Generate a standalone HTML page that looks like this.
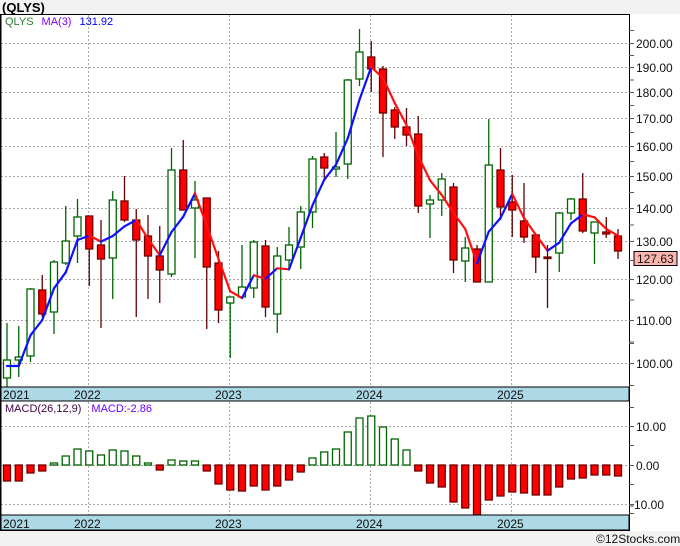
<!DOCTYPE html>
<html><head><meta charset="utf-8">
<style>
html,body{margin:0;padding:0;background:#f2f2f2;}
body{width:680px;height:546px;overflow:hidden;position:relative;font-family:"Liberation Sans",sans-serif;}
svg{position:absolute;left:0;top:0;}
</style></head><body>
<svg id="c" width="680" height="546" xmlns="http://www.w3.org/2000/svg" font-family="Liberation Sans, sans-serif">
<rect x="0" y="0" width="680" height="546" fill="#f2f2f2"/>
<rect x="0" y="14" width="680" height="517" fill="#ffffff"/>
<text x="2" y="12" font-size="13" font-weight="bold" fill="#000">(QLYS)</text>
<g id="grid"></g>
<g id="chart"></g>
<rect x="0" y="387" width="629" height="14" fill="#add8e6" stroke="#000" stroke-width="1"/>
<rect x="0" y="515" width="629" height="15" fill="#add8e6" stroke="#000" stroke-width="1"/>
<g font-size="12" fill="#111">
<text x="3" y="399">2021</text><text x="74" y="399">2022</text><text x="215" y="399">2023</text><text x="356" y="399">2024</text><text x="497" y="399">2025</text>
<text x="3" y="528">2021</text><text x="74" y="528">2022</text><text x="215" y="528">2023</text><text x="356" y="528">2024</text><text x="497" y="528">2025</text>
</g>
<line x1="0.5" y1="14" x2="0.5" y2="531" stroke="#000" stroke-width="2"/>
<line x1="0" y1="14.5" x2="629" y2="14.5" stroke="#000" stroke-width="1"/>
<line x1="629.5" y1="14" x2="629.5" y2="531" stroke="#000" stroke-width="1"/>
<line x1="0" y1="530.5" x2="629" y2="530.5" stroke="#000" stroke-width="1"/>
<g font-size="12" fill="#111" id="axis">
<text x="636" y="48">200.00</text><text x="636" y="72">190.00</text><text x="636" y="97">180.00</text>
<text x="636" y="123">170.00</text><text x="636" y="151">160.00</text><text x="636" y="181">150.00</text>
<text x="636" y="213">140.00</text><text x="636" y="246">130.00</text><text x="636" y="284">120.00</text>
<text x="636" y="325">110.00</text><text x="636" y="368">100.00</text>
<text x="636" y="431">10.00</text><text x="636" y="470">0.00</text><text x="630" y="509">-10.00</text>
</g>
<rect x="634" y="251.5" width="43" height="14" fill="#ffb6b0" stroke="#000" stroke-width="1"/>
<text x="637" y="263" font-size="12" fill="#111">127.63</text>
<text x="5" y="25" font-size="11"><tspan fill="#2e7d32">QLYS</tspan><tspan fill="#8000ff" dx="8">MA(3)</tspan><tspan fill="#0000ff" dx="8">131.92</tspan></text>
<text x="5" y="412" font-size="11"><tspan fill="#400040">MACD(26,12,9)</tspan><tspan fill="#6a00ff" dx="10">MACD:-2.86</tspan></text>
<text x="596" y="543" font-size="12" fill="#111">©12Stocks.com</text>
</svg>
<script>
var NS="http://www.w3.org/2000/svg";
function el(p,t,a){var e=document.createElementNS(NS,t);for(var k in a)e.setAttribute(k,a[k]);p.appendChild(e);return e;}
var grid=document.getElementById('grid'),ch=document.getElementById('chart'),svg=document.getElementById('c');
var ys=[43,67,92,118,146,176,208,241,279,320,363];
ys.forEach(function(y){el(grid,'line',{x1:1,y1:y+.5,x2:629,y2:y+.5,stroke:'#aaa','stroke-width':1,'stroke-dasharray':'2,2'});});
[426,465,504].forEach(function(y){el(grid,'line',{x1:1,y1:y+.5,x2:629,y2:y+.5,stroke:'#aaa','stroke-width':1,'stroke-dasharray':'2,2'});});
[88,229,370,511].forEach(function(x){el(grid,'line',{x1:x+.5,y1:15,x2:x+.5,y2:387,stroke:'#aaa','stroke-width':1,'stroke-dasharray':'2,2'});el(grid,'line',{x1:x+.5,y1:402,x2:x+.5,y2:515,stroke:'#aaa','stroke-width':1,'stroke-dasharray':'2,2'});});
var tk=[];for(var i=0;i<ys.length;i++){tk.push(ys[i]);if(i<ys.length-1)tk.push((ys[i]+ys[i+1])/2);}
tk.push(30,385,343);
tk.forEach(function(y){el(svg,'line',{x1:629,y1:y+.5,x2:634,y2:y+.5,stroke:'#555','stroke-width':1});});
[407,426,445,465,484,504,513].forEach(function(y){el(svg,'line',{x1:629,y1:y+.5,x2:634,y2:y+.5,stroke:'#555','stroke-width':1});});
var C=[[360,378,323,387,1],[357,360,326,377,1],[289,356,288,362,1],[290,314,275,317,0],[262,312,260,334,1],[241,263,206,265,1],[217,236,199,263,1],[216,249,216,286,0],[245,259,220,328,0],[200,258,191,299,1],[201,220,176,222,0],[220,240,209,317,0],[236,256,215,299,0],[256,270,226,303,0],[170,274,148,277,1],[170,210,140,210,0],[200,208,181,258,1],[198,267,198,329,0],[263,310,251,323,0],[297,303,297,358,1],[287,297,245,298,1],[242,288,240,298,1],[246,307,240,317,0],[256,314,247,333,1],[245,260,227,268,1],[212,247,206,269,1],[159,212,156,228,1],[157,168,153,178,0],[167,169,132,177,1],[80,164,79,179,1],[52,79,29,86,1],[57,69,41,92,0],[69,113,66,157,0],[110,127,107,139,0],[127,135,108,146,0],[134,206,116,213,0],[200,204,195,238,1],[179,200,173,216,1],[187,260,183,273,0],[248,261,237,282,1],[249,282,245,282,0],[165,282,119,282,1],[170,207,148,220,0],[202,210,175,237,0],[221,237,183,243,0],[235,257,235,273,0],[257,258,245,308,0],[213,253,212,272,1],[199,213,198,220,1],[199,231,173,233,0],[222,233,222,264,1],[232,234,217,238,0],[236,251,229,259,0]];
function X(i){return 7+i*11.75;}
C.forEach(function(c,i){var x=X(i);var g=c[4];
el(ch,'line',{x1:x,y1:c[2],x2:x,y2:c[3],stroke:g?'#006400':'#600000','stroke-width':1.3});
el(ch,'rect',{x:x-3.5,y:c[0],width:7,height:Math.max(1.5,c[1]-c[0]),fill:g?'#fff':'#ff0000',stroke:g?'#006400':'#700000','stroke-width':1.3});});
var cl=C.map(function(c){return c[4]?c[0]:c[1];});var ma=[];
for(var i=0;i<C.length;i++){var s=0,n=0;for(var j=Math.max(0,i-2);j<=i;j++){s+=cl[j];n++;}ma.push(s/n);}
ma[0]=366;ma[1]=366;
for(var i=1;i<ma.length;i++){el(ch,'line',{x1:X(i-1),y1:ma[i-1],x2:X(i),y2:ma[i],stroke:ma[i]<=ma[i-1]?'#1010ff':'#ff1010','stroke-width':2.2,'stroke-linecap':'round'});}
var M=[481,481,473,471,463,456,449,451,455,450,451,456,463,470,460,461,461,471,484,490,491,486,490,486,480,472,458,452,449,432,418,416,427,439,450,471,483,487,502,508,515,500,496,492,493,495,495,487,479,478,475,475,476];
M.forEach(function(v,i){var x=X(i);var z=465;if(v<z){el(ch,'rect',{x:x-3.5,y:v,width:7,height:z-v,fill:'#fff',stroke:'#006400','stroke-width':1.3});}else{el(ch,'rect',{x:x-3.5,y:z,width:7,height:Math.max(1,v-z),fill:'#ff0000',stroke:'#700000','stroke-width':1.3});}});
</script>
</body></html>
